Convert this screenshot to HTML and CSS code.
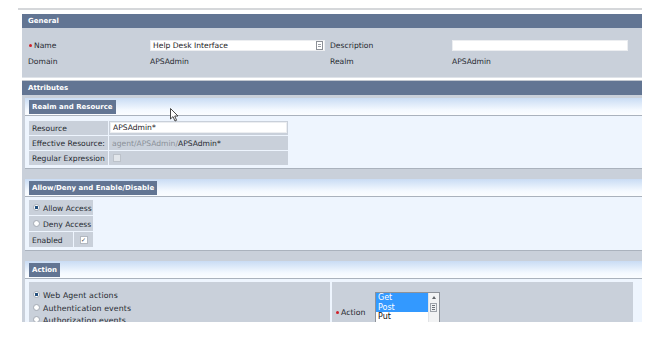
FILE: index.html
```html
<!DOCTYPE html>
<html lang="en">
<head>
  <meta charset="UTF-8">
  <title>Policy - Help Desk Interface</title>
  <link rel="stylesheet" href="styles.css">
</head>
<body>
<div class="page">
  <div class="top-rule"></div>

  <!-- General -->
  <div class="panel general">
    <div class="panel-head">General</div>
    <div class="general-body">
      <div class="field-grid">
        <div class="lbl"><span class="req"></span>Name</div>
        <div class="val">
          <div class="input-wrap">
            <input class="text-input name-input" type="text" value="Help Desk Interface">
            <span class="note-icon"></span>
          </div>
        </div>
        <div class="lbl">Description</div>
        <div class="val"><input class="text-input desc-input" type="text" value=""></div>

        <div class="lbl">Domain</div>
        <div class="val">APSAdmin</div>
        <div class="lbl">Realm</div>
        <div class="val">APSAdmin</div>
      </div>
    </div>
  </div>

  <!-- Attributes -->
  <div class="panel attributes">
    <div class="panel-head">Attributes</div>
    <div class="attr-body">

      <div class="sub">
        <div class="sub-band"><span class="tab">Realm and Resource</span></div>
        <div class="sub-body">
          <div class="kv">
            <div class="cell lbl-cell">Resource</div>
            <div class="cell"><input class="text-input res-input" type="text" value="APSAdmin*"></div>
            <div class="cell lbl-cell">Effective Resource:</div>
            <div class="cell val-cell"><span class="muted">agent/APSAdmin/</span>APSAdmin*</div>
            <div class="cell lbl-cell">Regular Expression</div>
            <div class="cell val-cell"><span class="check disabled"></span></div>
          </div>
        </div>
      </div>

      <div class="sub access-sub">
        <div class="sub-band"><span class="tab">Allow/Deny and Enable/Disable</span></div>
        <div class="sub-body">
          <div class="access">
            <div class="cell wide"><span class="radio on"></span>Allow Access</div>
            <div class="cell wide"><span class="radio"></span>Deny Access</div>
            <div class="cell lbl-cell">Enabled</div>
            <div class="cell center"><span class="check on">&#10003;</span></div>
          </div>
        </div>
      </div>

      <div class="sub">
        <div class="sub-band"><span class="tab">Action</span></div>
        <div class="sub-body action-body">
          <div class="action-cell events">
            <div class="opt"><span class="radio on"></span>Web Agent actions</div>
            <div class="opt"><span class="radio"></span>Authentication events</div>
            <div class="opt"><span class="radio"></span>Authorization events</div>
          </div>
          <div class="action-cell methods">
            <div class="action-lbl"><span class="req"></span>Action</div>
            <div class="listbox">
              <div class="options">
                <div class="option selected">Get</div>
                <div class="option selected">Post</div>
                <div class="option">Put</div>
              </div>
              <div class="scrollbar">
                <span class="arrow-up"></span>
                <span class="thumb"><span class="grip"></span></span>
              </div>
            </div>
          </div>
        </div>
      </div>

    </div>
  </div>

  <!-- mouse pointer left in the shot -->
  <svg class="cursor" width="9" height="14" viewBox="0 0 9 14">
    <path d="M0.5 0.5 L0.5 11 L3 8.6 L5 13 L6.6 12.3 L4.7 8 L8 8 Z" fill="#fff" stroke="#333" stroke-width="0.9" stroke-linejoin="round"/>
  </svg>
</div>
</body>
</html>
```

FILE: styles.css
```css
body {
  margin: 0;
  background: #fff;
  color: #262a30;
  font-family: "DejaVu Sans", Verdana, sans-serif;
  font-size: 7.6px;
}

.page {
  position: relative;
  width: 624px;
  height: 322px;
  margin-left: 18px;
  padding-top: 8px;
  box-sizing: border-box;
  overflow: hidden;
}

.top-rule {
  height: 2px;
  background: #d5d7da;
}

.panel {
  margin-left: 4px;
  width: 620px;
}
.panel.general {
  margin-top: 4px;
}
.panel.attributes {
  margin-top: 2px;
  border-top: 1px solid #c2c8d0;
}

.panel-head {
  height: 14px;
  line-height: 15px;
  padding-left: 6px;
  background: #627593;
  color: #fff;
  font-size: 7px;
  font-weight: bold;
}

/* General */
.general-body {
  height: 50px;
  box-sizing: border-box;
  padding-top: 12px;
  background: #c9d0da;
  border-bottom: 1px solid #dfe3e9;
}

.field-grid {
  display: grid;
  grid-template-columns: 122px 180px 122px 176px;
  grid-auto-rows: 11px;
  row-gap: 5px;
  align-items: center;
  padding-left: 6px;
}

.req {
  display: inline-block;
  width: 3px;
  height: 3px;
  margin: 0 2px 1px 1px;
  border-radius: 50%;
  background: #d0202a;
  vertical-align: middle;
}

.text-input {
  display: block;
  height: 11px;
  box-sizing: border-box;
  margin: 0;
  padding: 0 2px;
  border: 1px solid #eceef1;
  background: #fff;
  color: #1e2226;
  font-family: inherit;
  font-size: 7.6px;
  outline: none;
}
.name-input { width: 175px; }
.desc-input { width: 176px; }
.res-input { width: 177px; margin: 1px; }

.input-wrap {
  position: relative;
  width: 175px;
}
.note-icon {
  position: absolute;
  right: 2px;
  top: 1px;
  width: 5px;
  height: 7px;
  border: 1px solid #8c9097;
  background: repeating-linear-gradient(#fff 0 1px, #9a9ea5 1px 2px) 1px 1px / 3px 5px no-repeat, #fff;
}

/* Attributes */
.attr-body {
  background: #c9d0da;
  padding: 3px 0 0 3px;
  height: 260px;
}

.sub {
  background: #eef5fe;
  border-bottom: 1px solid #aab2bd;
  margin-bottom: 10px;
}

.sub-band {
  height: 15px;
  padding-top: 2px;
  background: linear-gradient(#c9dcf4, #f4f9ff 70%, #fbfdff);
  border-bottom: 1px solid #aab2bd;
}

.tab {
  display: inline-block;
  margin-left: 4px;
  padding: 0 3px;
  height: 14px;
  line-height: 15px;
  background: #627593;
  color: #fff;
  font-size: 7px;
  font-weight: bold;
  vertical-align: top;
}

.sub-body {
  padding: 5px 0 3px 4px;
}

.kv {
  display: grid;
  grid-template-columns: 79px 179px;
  grid-auto-rows: 14px;
  gap: 1px;
}

.cell {
  background: #c9d0da;
  line-height: 15px;
  white-space: nowrap;
}
.lbl-cell {
  padding-left: 3px;
}
.val-cell {
  padding-left: 3px;
}
.muted {
  color: #8b9099;
}

.check {
  display: inline-block;
  width: 6px;
  height: 6px;
  border: 1px solid #b2b8c0;
  background: #fff;
  vertical-align: middle;
  margin-top: -2px;
}
.check.disabled {
  margin-left: 1px;
  background: #e2e6eb;
  border-color: #bcc2ca;
}
.check.on {
  color: #3b4450;
  font-size: 6px;
  line-height: 6px;
  text-align: center;
  font-weight: bold;
}

.access-sub .sub-body {
  padding-top: 3px;
}
.access {
  display: grid;
  grid-template-columns: 44px 19px;
  grid-auto-rows: 15px;
  gap: 1px;
  width: 64px;
}
.access .cell {
  line-height: 17px;
}
.access .wide {
  grid-column: span 2;
  padding-left: 4px;
}
.center {
  text-align: center;
}

.radio {
  display: inline-block;
  width: 5px;
  height: 5px;
  margin-right: 3px;
  border: 1px solid #a9afb7;
  border-radius: 50%;
  background: radial-gradient(circle, #fff 40%, #e4e8ee);
  vertical-align: middle;
  margin-top: -2px;
}
.radio.on {
  background: radial-gradient(circle, #24507e 0 1.6px, #fff 2px);
}

/* Action */
.action-body {
  display: grid;
  grid-template-columns: 301px 301px;
  column-gap: 2px;
  padding: 3px 0 0 4px;
}

.action-cell {
  background: #c9d0da;
  height: 60px;
}

.events {
  padding: 8px 0 0 4px;
}
.opt {
  line-height: 12.5px;
  font-size: 7.8px;
  letter-spacing: 0.1px;
}

.methods {
  display: flex;
  padding: 10px 0 0 3px;
}
.action-lbl {
  width: 40px;
  margin-top: 16px;
  line-height: 10px;
  font-size: 7.8px;
}

.listbox {
  display: flex;
  width: 65px;
  height: 46px;
  box-sizing: border-box;
  border: 1px solid #8d9299;
  background: #fff;
}
.options {
  flex: 1;
}
.option {
  height: 9.5px;
  line-height: 10px;
  padding-left: 2px;
  font-size: 8px;
  color: #111;
}
.option.selected {
  background: #3399ff;
  color: #fff;
}

.scrollbar {
  position: relative;
  width: 10px;
  background: #f2f3f4;
  border-left: 1px solid #e1e3e6;
}
.arrow-up {
  position: absolute;
  left: 3px;
  top: 3px;
  border-left: 2px solid transparent;
  border-right: 2px solid transparent;
  border-bottom: 3px solid #606468;
}
.thumb {
  position: absolute;
  left: 1px;
  top: 10px;
  width: 7px;
  height: 9px;
  box-sizing: border-box;
  border: 1px solid #9ea3aa;
  background: #eef0f2;
}
.grip {
  position: absolute;
  left: 1px;
  top: 1px;
  width: 3px;
  height: 5px;
  background: repeating-linear-gradient(#6d7278 0 1px, transparent 1px 2px);
}

.cursor {
  position: absolute;
  left: 152px;
  top: 108px;
}
```
